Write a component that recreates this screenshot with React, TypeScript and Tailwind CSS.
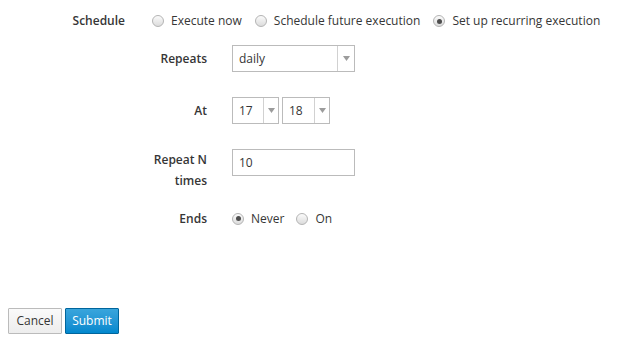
import React from 'react';

const FONT = { fontFamily: '"Open Sans", "Noto Sans", sans-serif' };

function Radio({ label, checked }: { label: string; checked?: boolean }) {
  return (
    <label className="flex items-center gap-[7px] text-[12px] text-[#363636]">
      <span className="flex h-[12px] w-[12px] items-center justify-center rounded-full border border-[#b4b4b4] bg-gradient-to-b from-[#fbfbfb] to-[#dcdcdc]">
        {checked && <span className="h-[5px] w-[5px] rounded-full bg-[#4d4d4d]" />}
      </span>
      {label}
    </label>
  );
}

function Select({ value, width, valueWidth }: { value: string; width: string; valueWidth: string }) {
  return (
    <div className={`flex h-[27px] items-stretch border border-[#bbbbbb] bg-white ${width}`}>
      <div className={`flex items-center pl-[6px] text-[12px] text-[#363636] ${valueWidth}`}>{value}</div>
      <div className="flex flex-1 items-center justify-center border-l border-[#d1d1d1]">
        <svg width="7" height="5" viewBox="0 0 7 5">
          <path d="M0 0 L7 0 L3.5 5 Z" fill="#9c9c9c" />
        </svg>
      </div>
    </div>
  );
}

function Row({ label, children, className = '' }: { label: React.ReactNode; children: React.ReactNode; className?: string }) {
  return (
    <div className={`flex ${className}`}>
      <div className="w-[207px] text-right text-[12px] font-semibold leading-[21px] text-[#363636]">{label}</div>
      <div className="ml-[25px]">{children}</div>
    </div>
  );
}

export default function App() {
  return (
    <div className="h-[351px] w-[633px] bg-white" style={FONT}>
      <div className="pt-[10px]">
        <div className="flex h-[22px] items-center">
          <div className="w-[125px] text-right text-[12px] font-semibold text-[#363636]">Schedule</div>
          <div className="ml-[27px] flex items-center gap-[13px]">
            <Radio label="Execute now" />
            <Radio label="Schedule future execution" />
            <Radio label="Set up recurring execution" checked />
          </div>
        </div>

        <Row label="Repeats" className="mt-[13px] items-center">
          <Select value="daily" width="w-[123px]" valueWidth="w-[104px]" />
        </Row>

        <Row label="At" className="mt-[25px] items-center">
          <div className="flex gap-[3px]">
            <Select value="17" width="w-[47px]" valueWidth="w-[30px]" />
            <Select value="18" width="w-[48px]" valueWidth="w-[31px]" />
          </div>
        </Row>

        <Row label={<>Repeat N<br />times</>} className="mt-[25px] items-start">
          <div className="flex h-[27px] w-[123px] items-center border border-[#bbbbbb] bg-white pl-[6px] text-[12px] text-[#363636]">
            10
          </div>
        </Row>

        <Row label="Ends" className="mt-[17px] items-center">
          <div className="flex items-center gap-[12px]">
            <Radio label="Never" checked />
            <Radio label="On" />
          </div>
        </Row>
      </div>

      <div className="mt-[79px] flex gap-[3px] pl-[8px]">
        <button className="h-[26px] w-[54px] rounded-[1px] border border-[#bbbbbb] bg-gradient-to-b from-[#fafafa] to-[#ededed] text-[12px] text-[#363636]">
          Cancel
        </button>
        <button className="h-[26px] w-[54px] rounded-[1px] border border-[#00659c] bg-gradient-to-b from-[#39a5dc] to-[#0088ce] text-[12px] text-white">
          Submit
        </button>
      </div>
    </div>
  );
}
